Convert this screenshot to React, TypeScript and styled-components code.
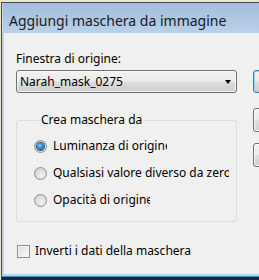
import React from "react";
import styled, {createGlobalStyle} from "styled-components";

const GlobalStyle = createGlobalStyle`
  html, body {
    margin: 0;
    padding: 0;
    background: #efe4c6;
  }
  * {
    box-sizing: border-box;
  }
`

const sources = [
    {id: 'lum', label: 'Luminanza di origine', clip: 114, checked: true},
    {id: 'any', label: 'Qualsiasi valore diverso da zero', clip: 176, checked: false},
    {id: 'opa', label: 'Opacità di origine', clip: 97, checked: false},
];

const App = () => {
    return (
        <Screen>
            <GlobalStyle/>
            <Window>
                <TitleBar>
                    <Title>Aggiungi maschera da immagine</Title>
                </TitleBar>
                <Client>
                    <LeftCol>
                        <FieldLabel>Finestra di origine:</FieldLabel>
                        <Select>
                            <SelectText>Narah_mask_0275</SelectText>
                            <Arrow/>
                        </Select>
                        <Group>
                            <Legend>Crea maschera da</Legend>
                            {sources.map(s => (
                                <RadioRow key={s.id}>
                                    <Radio $checked={s.checked}/>
                                    <OptionText style={{width: s.clip}}>{s.label}</OptionText>
                                </RadioRow>
                            ))}
                        </Group>
                        <CheckRow>
                            <CheckBox/>
                            <OptionText>Inverti i dati della maschera</OptionText>
                        </CheckRow>
                    </LeftCol>
                    <ButtonCol>
                        <SideButton $default/>
                        <SideButton/>
                        <SideButton/>
                    </ButtonCol>
                </Client>
            </Window>
        </Screen>
    )
}

const Screen = styled.div`
  width: 259px;
  height: 280px;
  overflow: hidden;
  padding: 2px 0 0 1px;
  display: flex;
  flex-direction: column;
  font-family: "Noto Sans", "Open Sans", sans-serif;
`

const Window = styled.div`
  flex: 1;
  display: flex;
  flex-direction: column;
  border-top: 1px solid #3d4c5f;
  border-left: 1px solid #3d4c5f;
  border-bottom: 3px solid #1b2631;
  box-shadow: inset 0 -1px 0 #3d95c4;
  min-height: 0;
`

const TitleBar = styled.div`
  height: 30px;
  flex-shrink: 0;
  display: flex;
  align-items: center;
  padding-left: 6px;
  background: linear-gradient(to bottom, #a3bddb 0%, #adc6e2 50%, #bbd1ea 100%);
  border-left: 1px solid #c6d8ec;
`

const Title = styled.div`
  font-size: 14px;
  color: #1a1a1a;
  white-space: nowrap;
  padding-top: 4px;
`

const Client = styled.div`
  flex: 1;
  display: flex;
  gap: 16px;
  padding: 18px 0 0 12px;
  background: #f0f0f0;
  border-left: 2px solid #bcd3eb;
  border-bottom: 2px solid #bcd3eb;
  margin-bottom: 1px;
  overflow: hidden;
  font-size: 12px;
  color: #000;
`

const LeftCol = styled.div`
  width: 221px;
  flex-shrink: 0;
  display: flex;
  flex-direction: column;
`

const FieldLabel = styled.div`
  line-height: 16px;
  height: 16px;
`

const Select = styled.div`
  margin-top: 3px;
  height: 23px;
  border: 1px solid #707070;
  border-radius: 3px;
  display: flex;
  align-items: center;
  justify-content: space-between;
  padding: 0 5px 0 3px;
  background: linear-gradient(to bottom, #f2f2f2 0%, #ebebeb 48%, #dddddd 52%, #cfcfcf 100%);
  box-shadow: inset 0 0 0 1px rgba(255, 255, 255, 0.7);
`

const SelectText = styled.span`
  line-height: 16px;
`

const Arrow = styled.span`
  width: 0;
  height: 0;
  border-left: 3.5px solid transparent;
  border-right: 3.5px solid transparent;
  border-top: 4px solid #000;
`

const Group = styled.fieldset`
  margin: 19px 0 0;
  padding: 10px 0 13px 17px;
  border: 1px solid #d5dfe5;
  border-radius: 3px;
  display: flex;
  flex-direction: column;
  gap: 11px;
  min-width: 0;
`

const Legend = styled.legend`
  padding: 0 2px;
  margin-left: 5px;
  line-height: 16px;
`

const RadioRow = styled.label`
  display: flex;
  align-items: center;
  gap: 6px;
  height: 16px;
`

const Radio = styled.span<{$checked?: boolean}>`
  width: 13px;
  height: 13px;
  flex-shrink: 0;
  border-radius: 50%;
  border: 1px solid #8e8f8f;
  background: radial-gradient(circle at 60% 65%, #f4f4f4 0%, #dcdcdc 55%, #c9c9c9 100%);
  display: flex;
  align-items: center;
  justify-content: center;

  &::after {
    content: "";
    display: ${p => p.$checked ? 'block' : 'none'};
    width: 7px;
    height: 7px;
    border-radius: 50%;
    background: radial-gradient(circle at 40% 35%, #8ed0f5 0%, #2d8ad0 45%, #0f4b85 100%);
    box-shadow: 0 0 0 1px #1e4f7c;
  }
`

const OptionText = styled.span`
  white-space: nowrap;
  overflow: hidden;
  line-height: 16px;
`

const CheckRow = styled.label`
  margin-top: 21px;
  margin-left: 1px;
  display: flex;
  align-items: center;
  gap: 5px;
  height: 16px;
`

const CheckBox = styled.span`
  width: 13px;
  height: 13px;
  flex-shrink: 0;
  border: 1px solid #8e8f8f;
  background: linear-gradient(135deg, #dcdcdc 0%, #eeeeee 60%, #fafafa 100%);
  box-shadow: inset 0 0 0 1px #f4f4f4;
`

const ButtonCol = styled.div`
  display: flex;
  flex-direction: column;
  gap: 11px;
  padding-top: 19px;
`

const SideButton = styled.div<{$default?: boolean}>`
  width: 75px;
  height: ${p => p.$default ? 23 : 24}px;
  margin-bottom: ${p => p.$default ? 4 : 0}px;
  border: 1px solid ${p => p.$default ? '#3c7fb1' : '#707070'};
  border-radius: 3px;
  background: linear-gradient(to bottom, #f2f2f2 0%, #ebebeb 48%, #dddddd 52%, #cfcfcf 100%);
  box-shadow: inset 0 0 0 1px ${p => p.$default ? '#8fd3f6' : 'rgba(255, 255, 255, 0.8)'};
`

export default App;
